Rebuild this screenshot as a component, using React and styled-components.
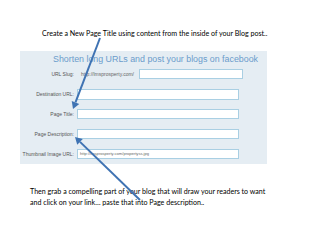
import React from 'react';
import styled, { createGlobalStyle } from 'styled-components'

const Global = createGlobalStyle`
  html, body { margin: 0; padding: 0; background: #ffffff; }
`

const Slide = styled.div`
  position: relative;
  width: 320px;
  height: 240px;
  overflow: hidden;
  background: #ffffff;
  padding-top: 28px;
  box-sizing: border-box;
`
const Caption = styled.p`
  margin: 0 0 0 ${p => p.left}px;
  font-family: Lato, "Open Sans", sans-serif;
  font-size: 7.1px;
  line-height: ${p => p.lh || 11}px;
  color: #000000;
  white-space: nowrap;
`
const Panel = styled.div`
  margin: 12px 0 0 20px;
  width: 247px;
  height: 113px;
  background: #e5edf3;
  box-sizing: border-box;
  padding: 2px 0 0 0;
`
const Heading = styled.div`
  padding-left: 33px;
  font-family: "Liberation Sans", Arial, sans-serif;
  font-size: 8.85px;
  line-height: 12px;
  color: #6b9ccb;
  white-space: nowrap;
`
const Form = styled.div`
  display: flex;
  flex-direction: column;
  gap: 10px;
  margin-top: 4px;
`
const Row = styled.div`
  display: flex;
  align-items: center;
  height: 10px;
`
const Label = styled.span`
  width: 54px;
  text-align: right;
  font-family: "Liberation Sans", Arial, sans-serif;
  font-size: 5px;
  color: #555;
  white-space: nowrap;
`
const Prefix = styled.span`
  margin-left: 7px;
  width: 58px;
  font-family: "Liberation Sans", Arial, sans-serif;
  font-size: 5px;
  color: #666;
  white-space: nowrap;
`
const Field = styled.div`
  margin-left: ${p => p.gap}px;
  width: ${p => p.w}px;
  height: ${p => p.h || 10}px;
  background: #ffffff;
  border: 1px solid #a9cfe3;
  box-sizing: border-box;
  font-family: "Liberation Sans", Arial, sans-serif;
  font-size: 4.1px;
  line-height: 8px;
  color: #666;
  padding-left: 2px;
  white-space: nowrap;
`
const Bottom = styled.div`
  margin: 23px 0 0 30px;
`
const Overlay = styled.svg`
  position: absolute;
  left: 0;
  top: 0;
  width: 320px;
  height: 240px;
  pointer-events: none;
`

function Arrow({ x1, y1, x2, y2 }) {
  const a = Math.atan2(y2 - y1, x2 - x1)
  const len = 7, w = 4
  const bx = x2 - len * Math.cos(a), by = y2 - len * Math.sin(a)
  const px = -Math.sin(a) * w, py = Math.cos(a) * w
  return (
    <g>
      <line x1={x1} y1={y1} x2={bx} y2={by} stroke="#3f73b3" strokeWidth="2" />
      <polygon points={`${x2},${y2} ${bx + px},${by + py} ${bx - px},${by - py}`} fill="#3f73b3" />
    </g>
  )
}

class App extends React.Component {
  render() {
    return (
      <Slide>
        <Global />
        <Caption left={42}>Create a New Page Title using content from the inside of your Blog post..</Caption>
        <Panel>
          <Heading>Shorten long URLs and post your blogs on facebook</Heading>
          <Form>
            <Row>
              <Label>URL Slug:</Label>
              <Prefix>http://lmsprosperty.com/</Prefix>
              <Field gap={0} w={104} />
            </Row>
            <Row>
              <Label>Destination URL:</Label>
              <Field gap={3} w={162} h={11} />
            </Row>
            <Row>
              <Label>Page Title:</Label>
              <Field gap={3} w={162} />
            </Row>
            <Row>
              <Label>Page Description:</Label>
              <Field gap={3} w={162} />
            </Row>
            <Row>
              <Label>Thumbnail Image URL:</Label>
              <Field gap={3} w={162}>http://lmsprosperty.com/propertyss.jpg</Field>
            </Row>
          </Form>
        </Panel>
        <Bottom>
          <Caption left={0} lh={10.5}>Then grab a compelling part of your blog that will draw your readers to want</Caption>
          <Caption left={0} lh={10.5}>and click on your link… paste that into Page description..</Caption>
        </Bottom>
        <Overlay viewBox="0 0 320 240">
          <Arrow x1={100} y1={38} x2={73} y2={109} />
          <Arrow x1={140} y1={200} x2={75} y2={137} />
        </Overlay>
      </Slide>
    );
  }
}

export default App;
